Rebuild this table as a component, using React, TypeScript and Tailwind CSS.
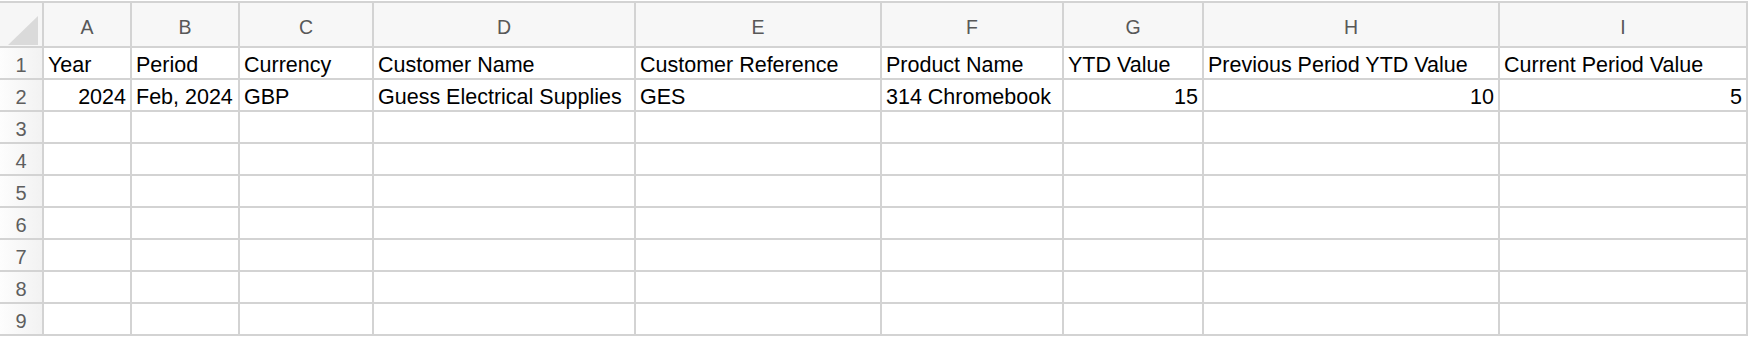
const columns = [
  { key: "A", width: "w-[86px]" },
  { key: "B", width: "w-[106px]" },
  { key: "C", width: "w-[132px]" },
  { key: "D", width: "w-[260px]" },
  { key: "E", width: "w-[244px]" },
  { key: "F", width: "w-[180px]" },
  { key: "G", width: "w-[138px]" },
  { key: "H", width: "w-[294px]" },
  { key: "I", width: "w-[246px]" },
];

type Cell = { value: string; align?: "left" | "right" };

const rows: Cell[][] = [
  [
    { value: "Year" },
    { value: "Period" },
    { value: "Currency" },
    { value: "Customer Name" },
    { value: "Customer Reference" },
    { value: "Product Name" },
    { value: "YTD Value" },
    { value: "Previous Period YTD Value" },
    { value: "Current Period Value" },
  ],
  [
    { value: "2024", align: "right" },
    { value: "Feb, 2024" },
    { value: "GBP" },
    { value: "Guess Electrical Supplies" },
    { value: "GES" },
    { value: "314 Chromebook" },
    { value: "15", align: "right" },
    { value: "10", align: "right" },
    { value: "5", align: "right" },
  ],
];

const TOTAL_ROWS = 9;

export default function App() {
  return (
    <div
      className="h-[338px] w-[1748px] overflow-hidden bg-white pt-[1px]"
      style={{ fontFamily: '"Liberation Sans", Arial, sans-serif' }}
    >
      <div className="grid grid-cols-[42px_86px_106px_132px_260px_244px_180px_138px_294px_246px] gap-[2px] bg-[#d3d3d3] py-[2px] pr-[2px]">
        {/* corner */}
        <div className="relative h-[43px] bg-[#f6f6f6]">
          <svg
            className="absolute left-[8px] top-[13px]"
            width="30"
            height="29"
            viewBox="0 0 30 29"
          >
            <polygon points="30,0 30,29 0,29" fill="#dadada" />
          </svg>
        </div>

        {/* column letters */}
        {columns.map((col) => (
          <div
            key={col.key}
            className={`${col.width} h-[43px] bg-[#f7f7f7] pt-[13px] text-center text-[19.5px] leading-[22px] text-[#585858]`}
          >
            {col.key}
          </div>
        ))}

        {Array.from({ length: TOTAL_ROWS }, (_, r) => (
          <Row key={r} index={r + 1} cells={rows[r]} />
        ))}
      </div>
    </div>
  );
}

function Row({ index, cells }: { index: number; cells?: Cell[] }) {
  return (
    <>
      <div className="h-[30px] bg-gradient-to-r from-[#fdfdfd] to-[#f2f2f2] pt-[4px] text-center text-[20px] leading-[26px] text-[#5e5e5e]">
        {index}
      </div>
      {columns.map((col, i) => {
        const cell = cells?.[i];
        return (
          <div
            key={col.key}
            className={`h-[30px] overflow-hidden whitespace-nowrap bg-white px-[4px] pt-[4px] text-[21.5px] leading-[26px] text-black ${
              cell?.align === "right" ? "text-right" : "text-left"
            }`}
          >
            {cell?.value}
          </div>
        );
      })}
    </>
  );
}
